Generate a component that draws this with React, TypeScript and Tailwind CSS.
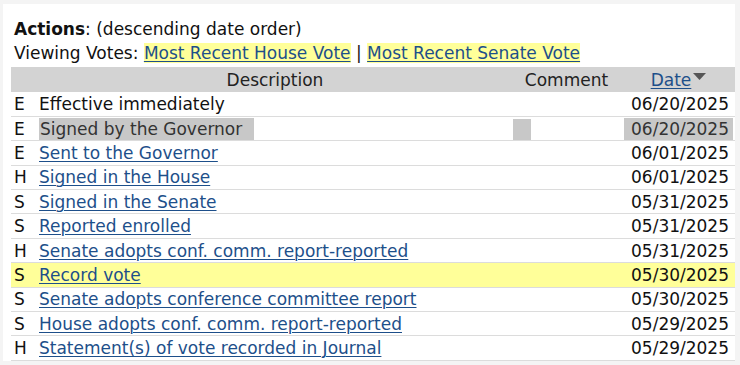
import React from 'react';

interface Action {
  chamber: string;
  text: string;
  date: string;
  link?: boolean;
  highlight?: boolean;
  selected?: boolean;
}

const actions: Action[] = [
  { chamber: 'E', text: 'Effective immediately', date: '06/20/2025' },
  { chamber: 'E', text: 'Signed by the Governor', date: '06/20/2025', selected: true },
  { chamber: 'E', text: 'Sent to the Governor', date: '06/01/2025', link: true },
  { chamber: 'H', text: 'Signed in the House', date: '06/01/2025', link: true },
  { chamber: 'S', text: 'Signed in the Senate', date: '05/31/2025', link: true },
  { chamber: 'S', text: 'Reported enrolled', date: '05/31/2025', link: true },
  { chamber: 'H', text: 'Senate adopts conf. comm. report-reported', date: '05/31/2025', link: true },
  { chamber: 'S', text: 'Record vote', date: '05/30/2025', link: true, highlight: true },
  { chamber: 'S', text: 'Senate adopts conference committee report', date: '05/30/2025', link: true },
  { chamber: 'S', text: 'House adopts conf. comm. report-reported', date: '05/29/2025', link: true },
  { chamber: 'H', text: 'Statement(s) of vote recorded in Journal', date: '05/29/2025', link: true },
];

const linkCls = 'text-[#1d4f8a] underline decoration-1 underline-offset-2';

const ActionRow = ({ a }: { a: Action }) => {
  const rowBg = a.highlight ? 'bg-[#ffff99]' : 'bg-white';
  return (
    <tr className={`${rowBg} border-b border-[#dcdcdc] h-[24.4px]`}>
      <td className="pl-[3px] pr-[3px] align-middle">{a.chamber}</td>
      <td className="px-[2px] align-middle">
        {a.selected ? (
          <span className="bg-[#c8c8c8] text-[#333] pl-[1px] pr-[12px] py-[1px]">{a.text}</span>
        ) : a.link ? (
          <a href="#" className={linkCls}>{a.text}</a>
        ) : (
          <span>{a.text}</span>
        )}
      </td>
      <td className="align-middle">
        {a.selected && <span className="inline-block bg-[#c8c8c8] w-[18px] h-[21px] align-middle" />}
      </td>
      <td className="text-right pr-[8px] align-middle">
        {a.selected ? (
          <span className="bg-[#c8c8c8] text-[#333] pl-[7px] pr-[4px] mr-[-4px] py-[1px]">{a.date}</span>
        ) : (
          a.date
        )}
      </td>
    </tr>
  );
};

export default function App() {
  return (
    <div className="w-[740px] h-[365px] bg-[#f4f4f4] pt-[4px] pl-[3px] font-['DejaVu_Sans',sans-serif] text-[17px] text-[#111] overflow-hidden">
      <div className="w-[732px] h-[357px] bg-white overflow-hidden pl-[8px]">
        <div className="pl-[3px] pt-[15px] leading-[21px]">
          <b>Actions</b>: (descending date order)
        </div>
        <div className="pl-[3px] pt-[3px] leading-[21px]">
          Viewing Votes:{' '}
          <a href="#" className={`${linkCls} bg-[#ffff99]`}>Most Recent House Vote</a>
          {' | '}
          <a href="#" className={`${linkCls} bg-[#ffff99]`}>Most Recent Senate Vote</a>
        </div>
        <table className="mt-[3px] w-[726px] border-collapse table-fixed leading-[22px]">
          <colgroup>
            <col className="w-[26px]" />
            <col className="w-[476px]" />
            <col className="w-[107px]" />
            <col className="w-[117px]" />
          </colgroup>
          <thead>
            <tr className="bg-[#d3d3d3] h-[25px]">
              <th className="font-normal"></th>
              <th className="font-normal text-center text-[#222]">Description</th>
              <th className="font-normal text-center text-[#222]">Comment</th>
              <th className="font-normal text-center">
                <a href="#" className={linkCls}>Date</a>
                <svg width="13" height="8" viewBox="0 0 13 8" className="inline-block align-[5px] ml-[2px]">
                  <polygon points="0,0 13,0 6.5,7" fill="#555" />
                </svg>
              </th>
            </tr>
          </thead>
          <tbody>
            {actions.map((a, i) => (
              <ActionRow key={i} a={a} />
            ))}
          </tbody>
        </table>
        <div className="w-[726px] h-[3px] bg-[#ffff99]" />
      </div>
    </div>
  );
}
